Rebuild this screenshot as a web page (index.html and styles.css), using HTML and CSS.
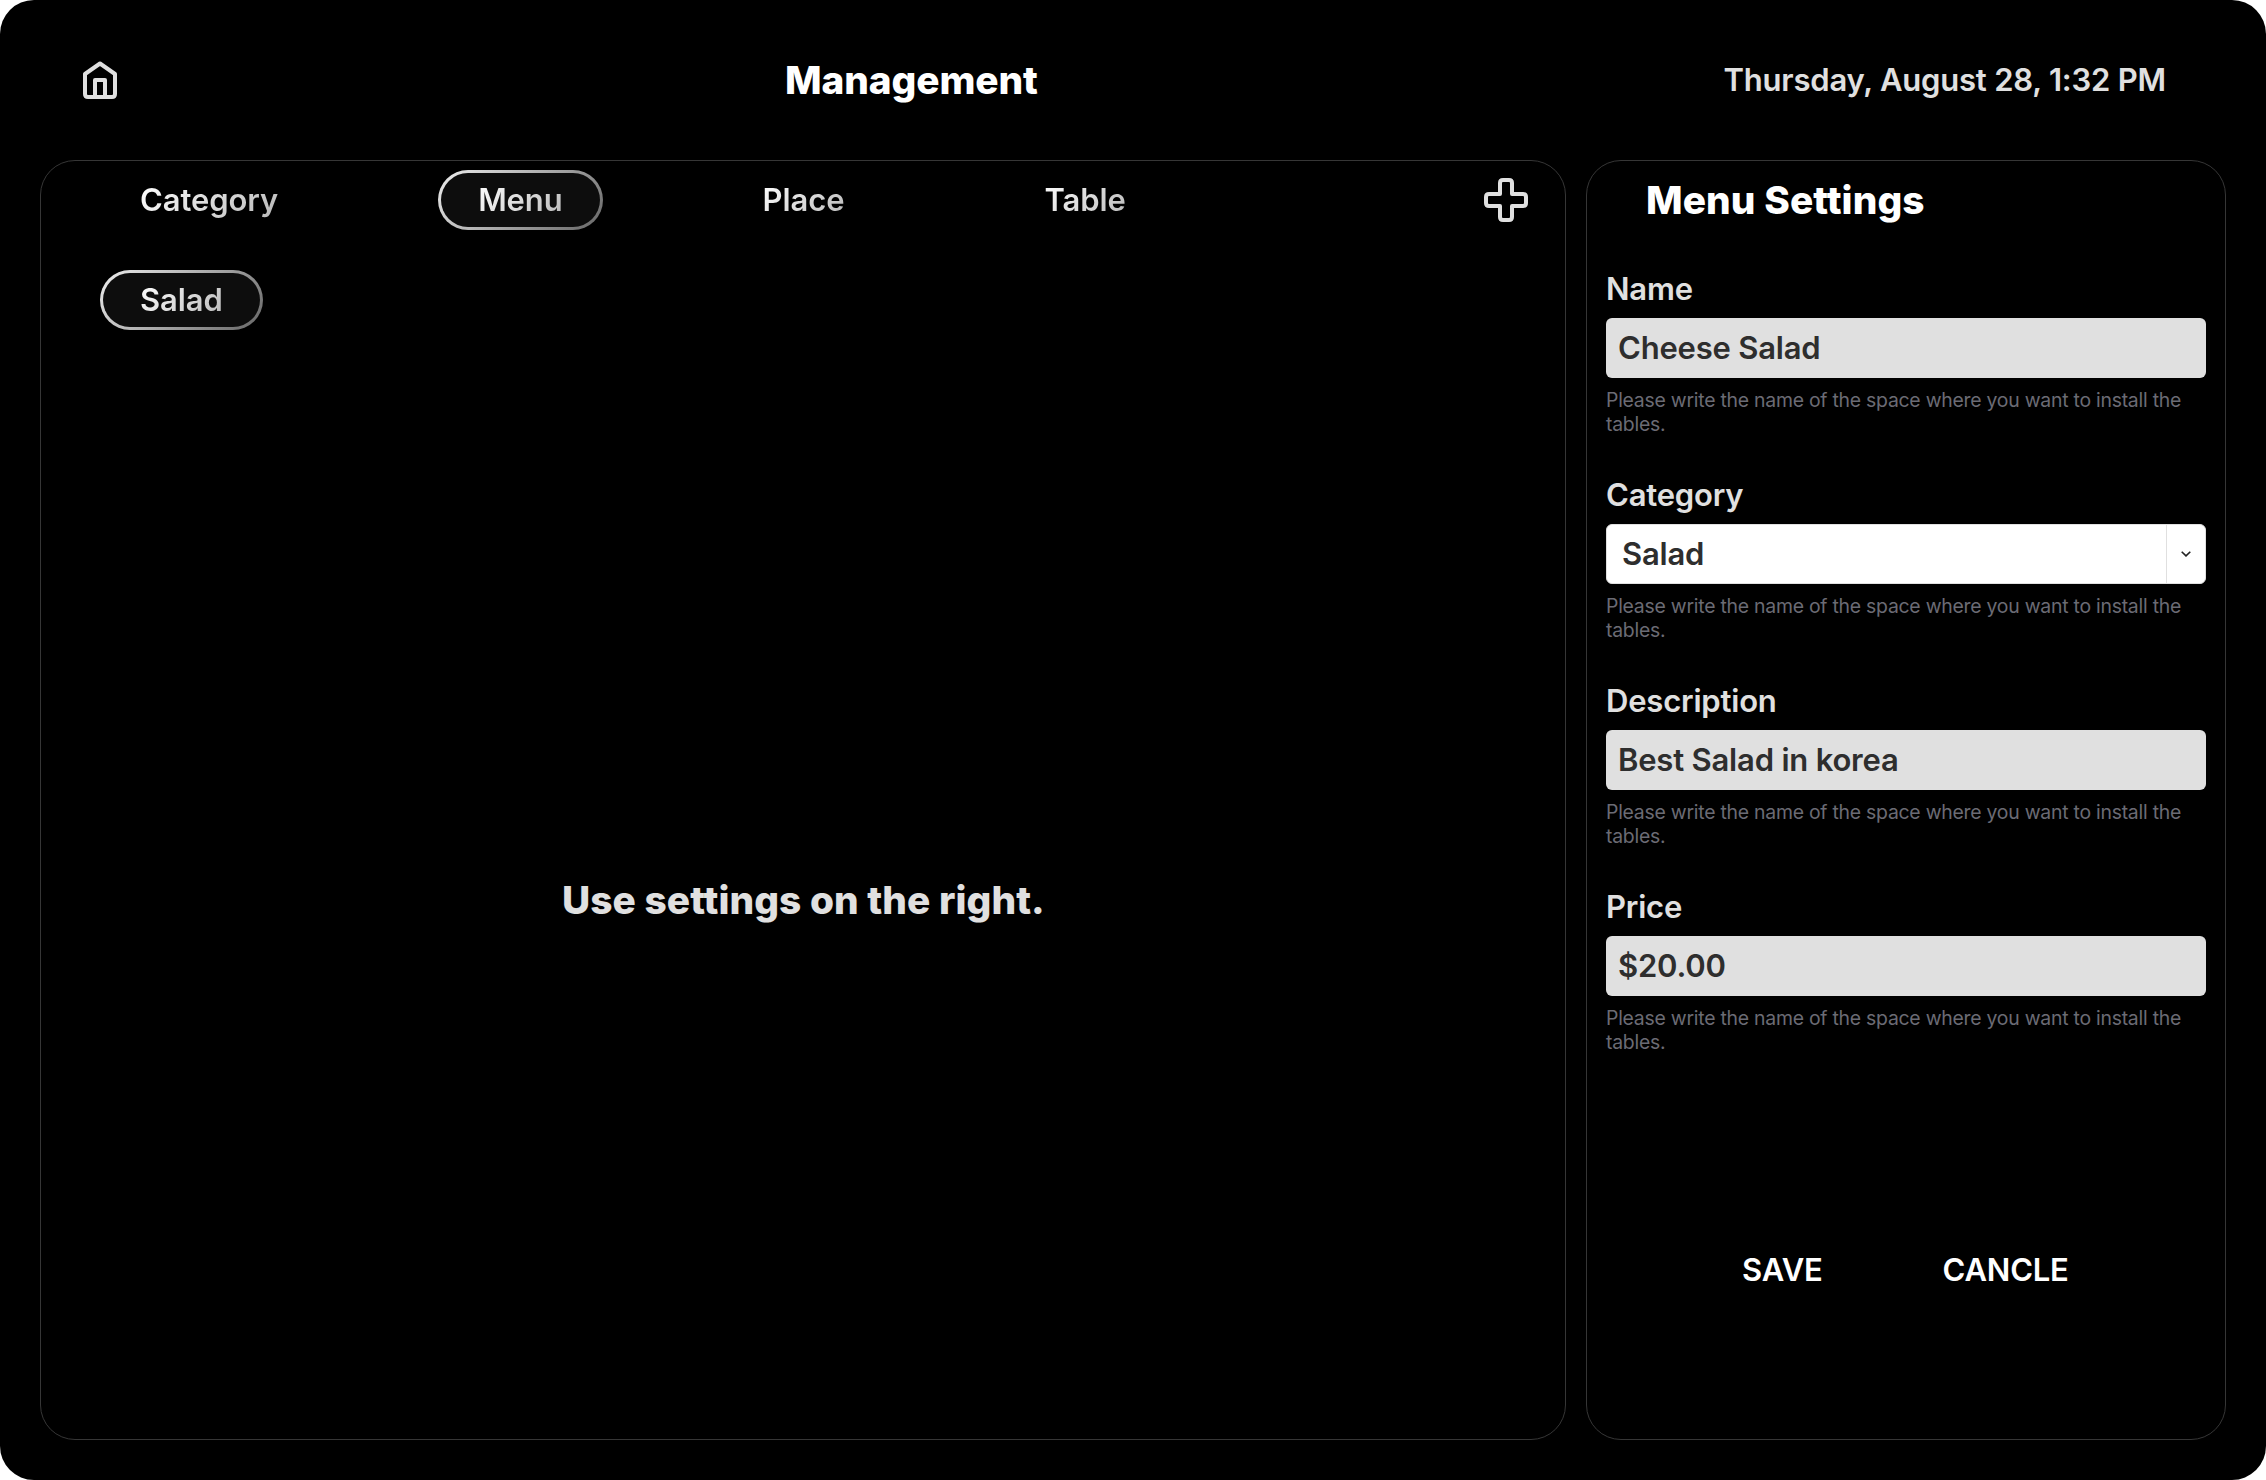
FILE: index.html
```html
<!DOCTYPE html>
<html lang="en">
<head>
<meta charset="utf-8">
<title>Management</title>
<link rel="stylesheet" href="styles.css">
</head>
<body>
<div class="app">
  <header class="topbar">
    <svg class="home" width="40" height="44" viewBox="0 0 40 44" fill="none" stroke="#e0e0e0" stroke-width="4" stroke-linejoin="round"><path d="M20 5.5 5 16V36Q5 39 8 39H32Q35 39 35 36V16Z"/><path d="M15 39V22H25V39"/></svg>
    <h1 class="title">Management</h1>
    <time class="date">Thursday, August 28, 1:32 PM</time>
  </header>
  <main class="panels">
    <section class="panel board">
      <nav class="tabs">
        <a class="pill"><span>Category</span></a>
        <a class="pill active"><span>Menu</span></a>
        <a class="pill"><span>Place</span></a>
        <a class="pill"><span>Table</span></a>
        <svg class="add" width="44" height="44" viewBox="0 0 44 44" fill="none" stroke="#e0e0e0" stroke-width="4" stroke-linejoin="round"><path d="M19 2H25Q28 2 28 5V16H39Q42 16 42 19V25Q42 28 39 28H28V39Q28 42 25 42H19Q16 42 16 39V28H5Q2 28 2 25V19Q2 16 5 16H16V5Q16 2 19 2Z"/></svg>
      </nav>
      <div class="filters"><a class="pill active"><span>Salad</span></a></div>
      <p class="message">Use settings on the right.</p>
    </section>
    <section class="panel settings">
      <h2 class="heading">Menu Settings</h2>
      <div class="fields">
        <div class="field">
          <div class="label">Name</div>
          <div class="input">Cheese Salad</div>
          <p class="help">Please write the name of the space where you want to install the tables.</p>
        </div>
        <div class="field">
          <div class="label">Category</div>
          <div class="input select"><span class="value">Salad</span><span class="arrow"><svg width="10" height="6" viewBox="0 0 10 6" fill="none" stroke="#222" stroke-width="1.6"><path d="M.7.7 5 4.9 9.3.7"/></svg></span></div>
          <p class="help">Please write the name of the space where you want to install the tables.</p>
        </div>
        <div class="field">
          <div class="label">Description</div>
          <div class="input">Best Salad in korea</div>
          <p class="help">Please write the name of the space where you want to install the tables.</p>
        </div>
        <div class="field">
          <div class="label">Price</div>
          <div class="input">$20.00</div>
          <p class="help">Please write the name of the space where you want to install the tables.</p>
        </div>
      </div>
      <div class="actions"><span>SAVE</span><span>CANCLE</span></div>
    </section>
  </main>
</div>
</body>
</html>
```
FILE: styles.css
```css
* { box-sizing: border-box; margin: 0; }
body { background: #fff; font-family: Inter, "Liberation Sans", sans-serif; font-size: 31px; font-weight: 600; letter-spacing: -0.2px; color: #e0e0e0; }
.app { width: 2266px; height: 1480px; padding: 0 40px 40px; background: #000; border-radius: 34px; }
.topbar { height: 160px; display: grid; grid-template-columns: 40px 1fr auto; align-items: center; padding: 0 60px 0 40px; }
.title { padding: 0 0 2px 665px; font-size: 38.8px; font-weight: 800; letter-spacing: -0.1px; color: #fff; }
.date { padding-bottom: 2px; }
.panels { display: grid; grid-template-columns: 1526px 640px; justify-content: space-between; height: 1280px; }
.panel { border: 1px solid #363636; border-radius: 35px; }
.board { display: flex; flex-direction: column; }
.tabs { display: flex; align-items: center; gap: 120px; padding: 9px 37px 0 59px; }
.add { margin-left: auto; }
.filters { display: flex; padding: 40px 59px 0; }
.pill { display: flex; align-items: center; height: 60px; padding: 0 40px; border-radius: 30px; letter-spacing: -0.1px; }
.pill span { line-height: 40px; background: linear-gradient(135deg, #fff, #b8b8b8); background-clip: text; -webkit-background-clip: text; color: transparent; }
.active { padding: 0 37px; border: 3px solid transparent; background: linear-gradient(#0d0d0d, #0d0d0d) padding-box, linear-gradient(135deg, #eee, #666) border-box; }
.message { padding: 545px 0 0 521px; font-size: 38.8px; line-height: 50px; font-weight: 800; letter-spacing: 0.07px; }
.settings { padding: 14px 19px 0; }
.heading { padding-left: 40px; font-size: 38.8px; line-height: 50px; font-weight: 800; letter-spacing: 0.1px; color: #fff; }
.fields { display: flex; flex-direction: column; gap: 38px; padding-top: 44px; }
.field { display: flex; flex-direction: column; height: 168px; }
.label { line-height: 40px; margin-bottom: 9px; }
.input { display: flex; align-items: center; height: 60px; flex: none; padding: 0 0 2px 12px; border-radius: 6px; background: #e0e0e0; color: #2e2e2e; }
.select { align-items: stretch; padding: 0; background: #fff; border: 1px solid #e0e0e0; }
.value { flex: 1; padding-left: 15px; line-height: 58px; }
.arrow { width: 39px; border-left: 1px solid #e0e0e0; display: grid; place-items: center; }
.help { margin-top: 10px; font-size: 19.4px; line-height: 24px; font-weight: 400; letter-spacing: -0.24px; color: #6b6b74; }
.actions { display: flex; gap: 120px; padding: 195px 0 0 136px; line-height: 40px; color: #fff; }
```
